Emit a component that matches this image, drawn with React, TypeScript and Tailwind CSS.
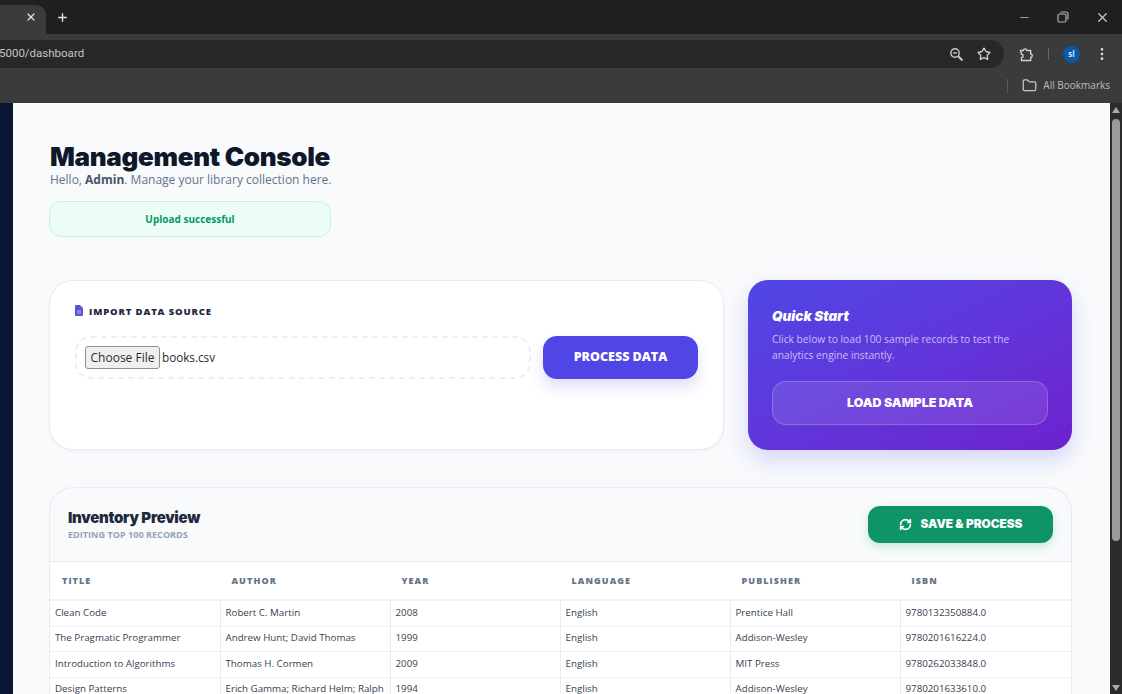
import { RefreshCw, Plus, X, Minus, Star, EllipsisVertical, Folder } from "lucide-react";

const BODY = "font-['Open_Sans','Noto_Sans',sans-serif]";
const HEAVY = "font-['Inter','Noto_Sans',sans-serif] font-black";

const COLUMNS = ["TITLE", "AUTHOR", "YEAR", "LANGUAGE", "PUBLISHER", "ISBN"];

const ROWS = [
  ["Clean Code", "Robert C. Martin", "2008", "English", "Prentice Hall", "9780132350884.0"],
  ["The Pragmatic Programmer", "Andrew Hunt; David Thomas", "1999", "English", "Addison-Wesley", "9780201616224.0"],
  ["Introduction to Algorithms", "Thomas H. Cormen", "2009", "English", "MIT Press", "9780262033848.0"],
  ["Design Patterns", "Erich Gamma; Richard Helm; Ralph", "1994", "English", "Addison-Wesley", "9780201633610.0"],
];

function BrowserChrome() {
  return (
    <div className="h-[103px] shrink-0 flex flex-col bg-[#3b3b3b] text-[#d0d0d0]">
      <div className="h-[34px] flex items-center bg-[#1f2020]">
        <div className="h-[29px] w-[46px] mt-[5px] rounded-tr-[10px] bg-[#3b3b3b] flex items-center justify-end pr-[9px]">
          <X size={12} strokeWidth={2.5} className="text-[#e4e4e4] -mt-[5px]" />
        </div>
        <Plus size={13} strokeWidth={2.5} className="ml-[10px] text-[#e4e4e4]" />
        <div className="ml-auto flex items-center gap-[26px] pr-3">
          <Minus size={13} className="text-[#9a9a9a]" />
          <svg width="12" height="12" viewBox="0 0 12 12" fill="none" stroke="#b5b5b5" strokeWidth="1.2">
            <rect x="1" y="3" width="8" height="8" rx="1.5" />
            <path d="M3.5 1h5.5a2 2 0 0 1 2 2v5.5" />
          </svg>
          <X size={15} className="text-[#c8c8c8]" />
        </div>
      </div>
      <div className="h-[34px] pt-[6px] flex items-center">
        <div className="h-7 w-[1004px] rounded-r-[14px] bg-[#282828] flex items-center pr-[13px]">
          <span className="font-['Roboto',sans-serif] text-[11.5px] text-[#c4c4c4] -ml-[1px]">5000/dashboard</span>
          <div className="ml-auto flex items-center gap-[13px]">
            <svg width="15" height="15" viewBox="0 0 15 15" fill="none" stroke="#c8c8c8" strokeWidth="1.4">
              <circle cx="6" cy="6" r="4.2" />
              <path d="M4 6h4" />
              <path d="M9.2 9.2l4.3 4.3" strokeWidth="2" />
            </svg>
            <Star size={14} strokeWidth={2.2} className="text-[#d4d4d4]" />
          </div>
        </div>
        <svg width="15" height="15" viewBox="0 0 15 15" fill="none" stroke="#cfcfcf" strokeWidth="1.4" className="ml-[15px]">
          <path d="M1.5 3.5h3a1.6 1.6 0 0 1 3.2 0h4v3.6a1.6 1.6 0 0 1 0 3.2v3.2h-9.2v-3a1.6 1.6 0 0 0 0-3.2z" strokeLinejoin="round" />
        </svg>
        <div className="ml-[14px] h-3 w-px bg-[#666]" />
        <div className={`${BODY} ml-[14px] w-[17px] h-[17px] rounded-full bg-[#0b57a8] text-[8px] font-bold text-[#d6e6f8] flex items-center justify-center`}>sl</div>
        <EllipsisVertical size={16} className="ml-[14px] text-[#e0e0e0]" />
      </div>
      <div className="h-[35px] flex items-center justify-end pr-3">
        <div className="h-3.5 w-px bg-[#5c5c5c] mr-[14px]" />
        <Folder size={15} className="text-[#c8c8c8] mr-[6px]" />
        <span className={`${BODY} text-[10px] text-[#bdbdbd]`}>All Bookmarks</span>
      </div>
    </div>
  );
}

function UploadCard() {
  return (
    <div className="w-[675px] h-[170px] rounded-[24px] border border-[#e8ecf2] bg-white pl-6 pr-6 pt-6 shadow-[0_1px_3px_rgba(15,23,42,0.05)]">
      <div className="flex items-center gap-[6px] pl-px">
        <svg width="8" height="11" viewBox="0 0 8 11" className="-mt-[3px]">
          <path d="M0 1a1 1 0 0 1 1-1h4l3 3v7a1 1 0 0 1-1 1H1a1 1 0 0 1-1-1z" fill="#5b56d6" />
          <path d="M2 6h4M2 8h4" stroke="#c9c7f2" strokeWidth="0.8" />
        </svg>
        <span className={`${BODY} text-[9.5px] font-extrabold tracking-[0.09em] text-[#1e293b]`}>IMPORT DATA SOURCE</span>
      </div>
      <div className="mt-[17px] flex items-center gap-3 pl-px">
        <div className="h-[43px] w-[456px] rounded-2xl border-2 border-dashed border-[#eceff3] flex items-center pl-2">
          <div className={`${BODY} h-[23px] w-[75px] rounded-[3px] border border-[#8f8f8f] bg-[#efefef] flex items-center justify-center text-[12px] text-[#2b2b2b]`}>Choose File</div>
          <span className={`${BODY} ml-[2px] text-[11.7px] text-[#2b2b2b]`}>books.csv</span>
        </div>
        <div className={`${BODY} h-[43px] w-[155px] rounded-[14px] bg-[#4f46e5] flex items-center justify-center text-[12.5px] font-extrabold text-white shadow-[0_8px_14px_rgba(79,70,229,0.18)]`}>PROCESS DATA</div>
      </div>
    </div>
  );
}

function QuickStartCard() {
  return (
    <div className="w-[324px] h-[170px] rounded-[20px] bg-gradient-to-br from-[#4f46e5] to-[#6d20cf] px-6 pt-[26px] shadow-[0_10px_22px_rgba(79,70,229,0.2)]">
      <div className={`${HEAVY} italic text-[13.5px] leading-5 text-white`}>Quick Start</div>
      <p className={`${BODY} mt-[5px] text-[10.25px] leading-4 text-[#c9bdf5]`}>
        Click below to load 100 sample records to test the analytics engine instantly.
      </p>
      <div className={`${HEAVY} mt-[18px] h-11 rounded-[14px] border border-white/20 bg-white/10 flex items-center justify-center text-[12.4px] text-white`}>LOAD SAMPLE DATA</div>
    </div>
  );
}

function InventoryPanel() {
  return (
    <div className="w-[1023px] rounded-t-[24px] border border-b-0 border-[#e8ecf2] bg-[#f8fafc] overflow-hidden">
      <div className="h-[74px] flex items-center justify-between pl-[18px] pr-[18px] border-b border-[#e8ecf2]">
        <div className="pt-[1px]">
          <div className={`${HEAVY} text-[15px] leading-[18px] tracking-[-0.02em] text-[#1e293b]`}>Inventory Preview</div>
          <div className={`${BODY} mt-[1px] text-[9.1px] font-bold text-[#94a3b8]`}>EDITING TOP 100 RECORDS</div>
        </div>
        <div className={`${HEAVY} h-[37px] w-[185px] rounded-[12px] bg-[#0f9468] flex items-center justify-center gap-[9px] text-[11.8px] text-white shadow-[0_4px_10px_rgba(15,148,104,0.2)]`}>
          <RefreshCw size={13} strokeWidth={3} />
          SAVE &amp; PROCESS
        </div>
      </div>
      <div className="bg-white">
        <div className="grid grid-cols-[169.5px_170px_170px_170px_170px_1fr] h-[39px] items-center border-b-2 border-[#eef1f5]">
          {COLUMNS.map((c) => (
            <div key={c} className={`${BODY} pl-3 text-[9px] font-extrabold tracking-[0.12em] text-[#64748b]`}>{c}</div>
          ))}
        </div>
        {ROWS.map((row) => (
          <div key={row[0]} className="grid grid-cols-[169.5px_170px_170px_170px_170px_1fr] h-[25.5px] border-b border-[#eef1f5]">
            {row.map((cell, i) => (
              <div key={i} className={`${BODY} pl-[5px] flex items-center whitespace-nowrap overflow-hidden text-[9.75px] text-[#374151] ${i > 0 ? "border-l border-[#e8ecf0]" : ""}`}>{cell}</div>
            ))}
          </div>
        ))}
      </div>
    </div>
  );
}

function Scrollbar() {
  return (
    <div className="w-3 shrink-0 bg-[#2b2b2b] flex flex-col items-center pt-[4px]">
      <div className="w-0 h-0 border-x-[4px] border-x-transparent border-b-[6px] border-b-[#a8a8a8]" />
      <div className="mt-[6px] w-2 h-[422px] rounded-full bg-[#9b9b9b]" />
      <div className="mt-auto mb-[3px] w-0 h-0 border-x-[4px] border-x-transparent border-t-[6px] border-t-[#a8a8a8]" />
    </div>
  );
}

export default function App() {
  return (
    <div className="w-[1122px] h-[694px] overflow-hidden flex flex-col">
      <BrowserChrome />
      <div className="flex flex-1 min-h-0">
        <div className="w-[13px] shrink-0 bg-[#0a1633]" />
        <div className="flex-1 min-w-0 bg-[#f8fafc] pl-[36px] pt-[38px] overflow-hidden">
          <h1 className={`${HEAVY} pl-px text-[26px] leading-[32px] tracking-[-0.012em] text-[#0f172a]`}>Management Console</h1>
          <p className={`${BODY} -mt-px pl-px text-[12px] leading-4 text-[#64748b]`}>
            Hello, <b className="font-bold text-[#475569]">Admin</b>. Manage your library collection here.
          </p>
          <div className={`${BODY} mt-[13px] h-9 w-[282px] rounded-xl border border-[#c9f2dd] bg-[#ecfdf5] flex items-center justify-center text-[10px] font-bold text-[#059669]`}>Upload successful</div>
          <div className="mt-[43px] flex gap-6">
            <UploadCard />
            <QuickStartCard />
          </div>
          <div className="mt-[37px]">
            <InventoryPanel />
          </div>
        </div>
        <Scrollbar />
      </div>
    </div>
  );
}
